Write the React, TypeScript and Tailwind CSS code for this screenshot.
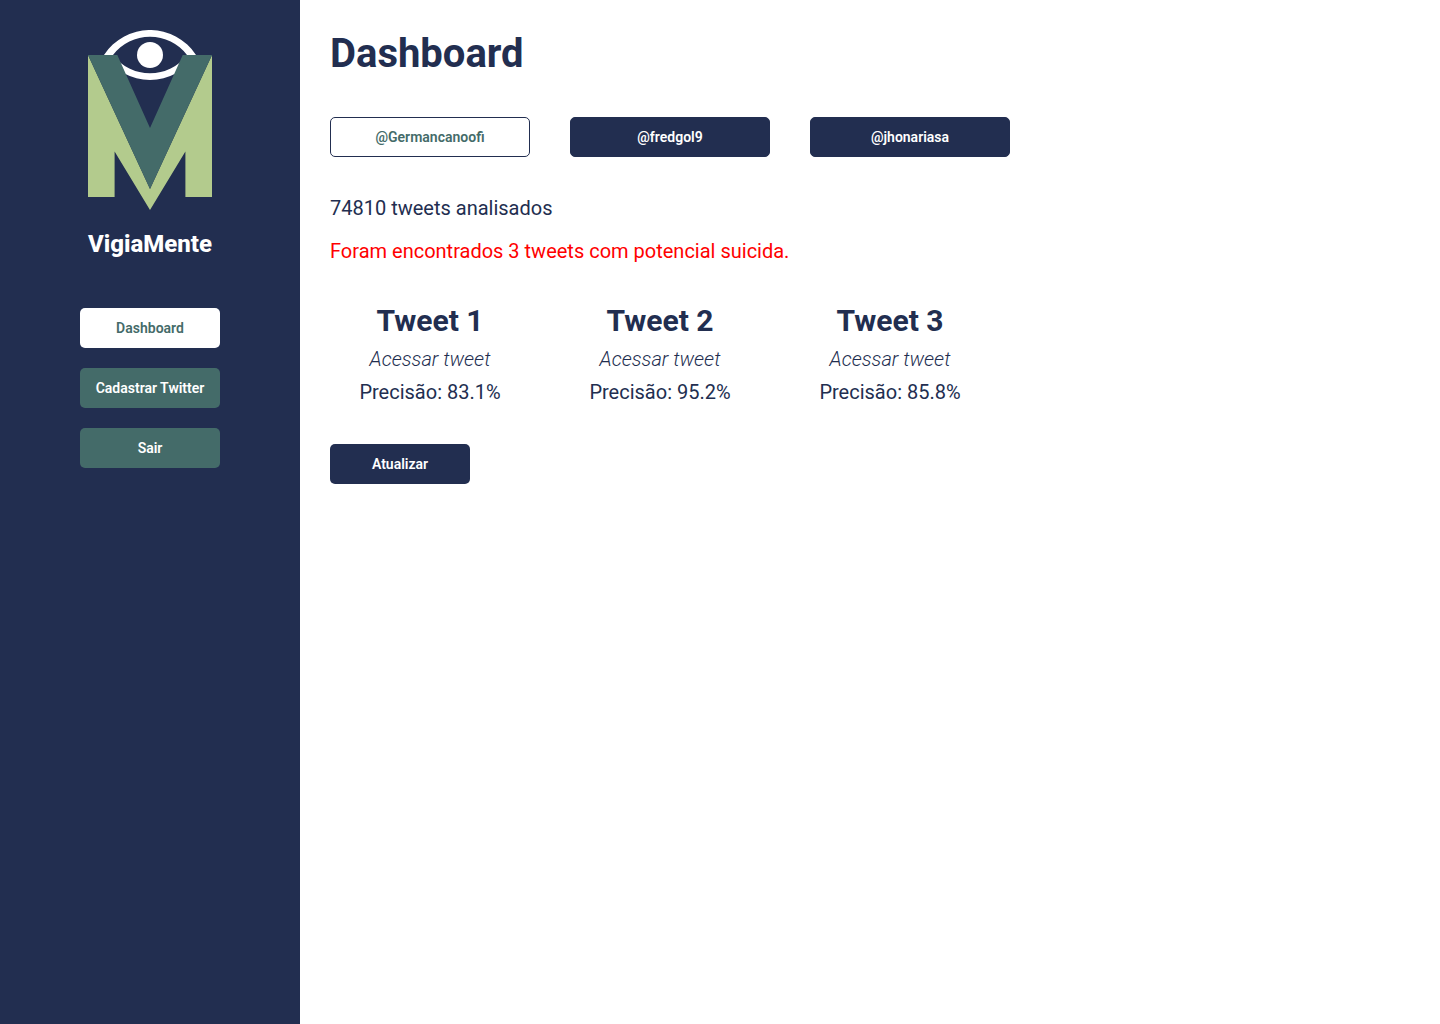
import React from 'react';

function Logo() {
  return (
    <svg viewBox="0 0 124 180" className="h-[180px] w-[124px]" role="img" aria-label="VigiaMente">
      <path
        fillRule="evenodd"
        fill="#fff"
        d="M16 25A54.8 54.8 0 0 1 108 25A54.8 54.8 0 0 1 16 25ZM25 25A46.5 46.5 0 0 0 99 25A46.5 46.5 0 0 0 25 25Z"
      />
      <circle cx="62" cy="25" r="13" fill="#fff" />
      <path fill="#b3cb8d" d="M0 25L62 159L124 25V167H97.4V121.5L62 180L26.6 121.5V167H0Z" />
      <path fill="#446b69" d="M0 25H29.3L62 98L94.7 25H124L62 159Z" />
    </svg>
  );
}

const menu = ['Dashboard', 'Cadastrar Twitter', 'Sair'];
const accounts = ['@Germancanoofi', '@fredgol9', '@jhonariasa'];
const tweets = [
  { title: 'Tweet 1', precision: '83.1%' },
  { title: 'Tweet 2', precision: '95.2%' },
  { title: 'Tweet 3', precision: '85.8%' },
];

export default function App() {
  return (
    <div className="flex min-h-screen bg-white font-['Roboto',sans-serif] text-[#222e50]">
      <aside className="flex w-[300px] shrink-0 flex-col items-center bg-[#222e50] pt-[30px]">
        <Logo />
        <p className="mt-5 text-2xl leading-7 font-extrabold text-white">VigiaMente</p>
        <nav className="mt-[50px] flex flex-col gap-5">
          {menu.map((label, i) => (
            <button
              key={label}
              className={`h-10 w-[140px] rounded-[5px] text-sm font-semibold ${i === 0 ? 'bg-white text-[#446b69]' : 'bg-[#446b69] text-white'}`}
            >
              {label}
            </button>
          ))}
        </nav>
      </aside>
      <main className="flex-1 p-[30px]">
        <h1 className="text-[40px] leading-[47px] font-bold">Dashboard</h1>
        <div className="mt-10 flex flex-wrap gap-10">
          {accounts.map((name, i) => (
            <button
              key={name}
              className={`h-10 w-[200px] rounded-[5px] border border-[#222e50] text-sm font-semibold ${i === 0 ? 'bg-white text-[#446b69]' : 'bg-[#222e50] text-white'}`}
            >
              {name}
            </button>
          ))}
        </div>
        <p className="mt-10 text-xl leading-[23px]">74810 tweets analisados</p>
        <p className="mt-5 text-xl leading-[23px] text-[#ff0000]">Foram encontrados 3 tweets com potencial suicida.</p>
        <div className="mt-10 flex flex-wrap gap-[30px]">
          {tweets.map((t) => (
            <section key={t.title} className="flex w-[200px] flex-col items-center gap-[10px]">
              <h2 className="text-[30px] leading-[35px] font-bold">{t.title}</h2>
              <a href="#" className="text-xl leading-[23px] font-light italic">Acessar tweet</a>
              <p className="text-xl leading-[23px]">Precisão: {t.precision}</p>
            </section>
          ))}
        </div>
        <button className="mt-10 h-10 w-[140px] rounded-[5px] bg-[#222e50] text-sm font-semibold text-white">Atualizar</button>
      </main>
    </div>
  );
}
